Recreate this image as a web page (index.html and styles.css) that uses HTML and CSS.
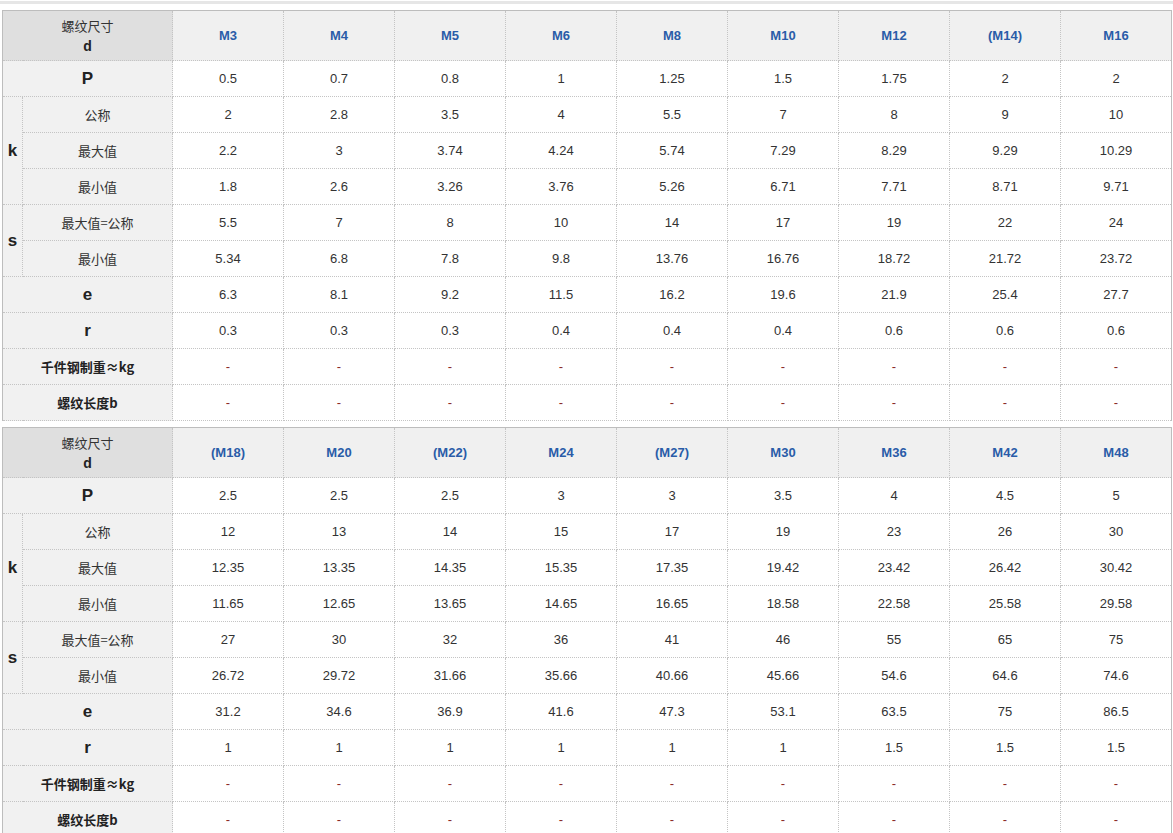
FILE: index.html
```html
<!DOCTYPE html>
<html lang="zh">
<head>
<meta charset="utf-8">
<link rel="stylesheet" href="styles.css">
</head>
<body>
<div class="topbar"></div>
<div class="wrap">
<table class="spec">
  <colgroup><col class="c-sub"><col class="c-lab"><col span="9" class="c-d"></colgroup>
  <tr class="head"><th colspan="2" class="corner">螺纹尺寸<br><b>d</b></th><th>M3</th><th>M4</th><th>M5</th><th>M6</th><th>M8</th><th>M10</th><th>M12</th><th>(M14)</th><th>M16</th></tr>
  <tr><td colspan="2" class="lab big">P</td><td>0.5</td><td>0.7</td><td>0.8</td><td>1</td><td>1.25</td><td>1.5</td><td>1.75</td><td>2</td><td>2</td></tr>
  <tr><td rowspan="3" class="lab big sub">k</td><td class="lab">公称</td><td>2</td><td>2.8</td><td>3.5</td><td>4</td><td>5.5</td><td>7</td><td>8</td><td>9</td><td>10</td></tr>
  <tr><td class="lab">最大值</td><td>2.2</td><td>3</td><td>3.74</td><td>4.24</td><td>5.74</td><td>7.29</td><td>8.29</td><td>9.29</td><td>10.29</td></tr>
  <tr><td class="lab">最小值</td><td>1.8</td><td>2.6</td><td>3.26</td><td>3.76</td><td>5.26</td><td>6.71</td><td>7.71</td><td>8.71</td><td>9.71</td></tr>
  <tr><td rowspan="2" class="lab big sub">s</td><td class="lab">最大值=公称</td><td>5.5</td><td>7</td><td>8</td><td>10</td><td>14</td><td>17</td><td>19</td><td>22</td><td>24</td></tr>
  <tr><td class="lab">最小值</td><td>5.34</td><td>6.8</td><td>7.8</td><td>9.8</td><td>13.76</td><td>16.76</td><td>18.72</td><td>21.72</td><td>23.72</td></tr>
  <tr><td colspan="2" class="lab big">e</td><td>6.3</td><td>8.1</td><td>9.2</td><td>11.5</td><td>16.2</td><td>19.6</td><td>21.9</td><td>25.4</td><td>27.7</td></tr>
  <tr><td colspan="2" class="lab big">r</td><td>0.3</td><td>0.3</td><td>0.3</td><td>0.4</td><td>0.4</td><td>0.4</td><td>0.6</td><td>0.6</td><td>0.6</td></tr>
  <tr><td colspan="2" class="lab bold">千件钢制重≈kg</td><td class="na">-</td><td class="na">-</td><td class="na">-</td><td class="na">-</td><td class="na">-</td><td class="na">-</td><td class="na">-</td><td class="na">-</td><td class="na">-</td></tr>
  <tr><td colspan="2" class="lab bold">螺纹长度b</td><td class="na">-</td><td class="na">-</td><td class="na">-</td><td class="na">-</td><td class="na">-</td><td class="na">-</td><td class="na">-</td><td class="na">-</td><td class="na">-</td></tr>
</table>
<table class="spec">
  <colgroup><col class="c-sub"><col class="c-lab"><col span="9" class="c-d"></colgroup>
  <tr class="head"><th colspan="2" class="corner">螺纹尺寸<br><b>d</b></th><th>(M18)</th><th>M20</th><th>(M22)</th><th>M24</th><th>(M27)</th><th>M30</th><th>M36</th><th>M42</th><th>M48</th></tr>
  <tr><td colspan="2" class="lab big">P</td><td>2.5</td><td>2.5</td><td>2.5</td><td>3</td><td>3</td><td>3.5</td><td>4</td><td>4.5</td><td>5</td></tr>
  <tr><td rowspan="3" class="lab big sub">k</td><td class="lab">公称</td><td>12</td><td>13</td><td>14</td><td>15</td><td>17</td><td>19</td><td>23</td><td>26</td><td>30</td></tr>
  <tr><td class="lab">最大值</td><td>12.35</td><td>13.35</td><td>14.35</td><td>15.35</td><td>17.35</td><td>19.42</td><td>23.42</td><td>26.42</td><td>30.42</td></tr>
  <tr><td class="lab">最小值</td><td>11.65</td><td>12.65</td><td>13.65</td><td>14.65</td><td>16.65</td><td>18.58</td><td>22.58</td><td>25.58</td><td>29.58</td></tr>
  <tr><td rowspan="2" class="lab big sub">s</td><td class="lab">最大值=公称</td><td>27</td><td>30</td><td>32</td><td>36</td><td>41</td><td>46</td><td>55</td><td>65</td><td>75</td></tr>
  <tr><td class="lab">最小值</td><td>26.72</td><td>29.72</td><td>31.66</td><td>35.66</td><td>40.66</td><td>45.66</td><td>54.6</td><td>64.6</td><td>74.6</td></tr>
  <tr><td colspan="2" class="lab big">e</td><td>31.2</td><td>34.6</td><td>36.9</td><td>41.6</td><td>47.3</td><td>53.1</td><td>63.5</td><td>75</td><td>86.5</td></tr>
  <tr><td colspan="2" class="lab big">r</td><td>1</td><td>1</td><td>1</td><td>1</td><td>1</td><td>1</td><td>1.5</td><td>1.5</td><td>1.5</td></tr>
  <tr><td colspan="2" class="lab bold">千件钢制重≈kg</td><td class="na">-</td><td class="na">-</td><td class="na">-</td><td class="na">-</td><td class="na">-</td><td class="na">-</td><td class="na">-</td><td class="na">-</td><td class="na">-</td></tr>
  <tr><td colspan="2" class="lab bold">螺纹长度b</td><td class="na">-</td><td class="na">-</td><td class="na">-</td><td class="na">-</td><td class="na">-</td><td class="na">-</td><td class="na">-</td><td class="na">-</td><td class="na">-</td></tr>
</table>
</div>
</body>
</html>
```
FILE: styles.css
```css
html, body {
  margin: 0;
  padding: 0;
  background: #fff;
}
body {
  font-family: "Liberation Sans", Arial, "Noto Sans CJK SC", sans-serif;
  font-size: 13px;
  color: #333;
}
.topbar {
  height: 3px;
  margin-top: 1px;
  background: #e6e6e6;
}
.wrap {
  padding: 6px 2px 0 2px;
}
.spec {
  width: 1169px;
  table-layout: fixed;
  border-collapse: collapse;
  border: 1px solid #bdbdbd;
  border-bottom: none;
  margin-bottom: 6px;
}
.c-sub { width: 20px; }
.c-lab { width: 150px; }
.c-d { width: 111px; }
.spec th, .spec td {
  border: 1px dotted #c4c4c4;
  text-align: center;
  vertical-align: middle;
  padding: 0;
  height: 35px;
  font-weight: normal;
}
.spec tr.head th {
  height: 49px;
  background: #f0f0f0;
  color: #2a5ca8;
  font-weight: bold;
}
.spec tr.head th.corner {
  background: #dfdfdf;
  color: #333;
  font-weight: normal;
  line-height: 20px;
  font-family: "Noto Sans CJK SC", "Liberation Sans", sans-serif;
}
.corner b {
  font-family: "Liberation Sans", Arial, sans-serif;
  font-weight: bold;
  font-size: 14px;
  color: #222;
}
.spec td.lab {
  background: #f1f1f1;
  font-family: "Noto Sans CJK SC", "Liberation Sans", sans-serif;
  color: #333;
}
.spec td.lab.big {
  font-family: "Liberation Sans", Arial, sans-serif;
  font-weight: bold;
  font-size: 17px;
  color: #222;
}
.spec td.lab.bold {
  font-weight: bold;
  color: #222;
}
.spec td.na {
  color: #8a2b1f;
}
```
